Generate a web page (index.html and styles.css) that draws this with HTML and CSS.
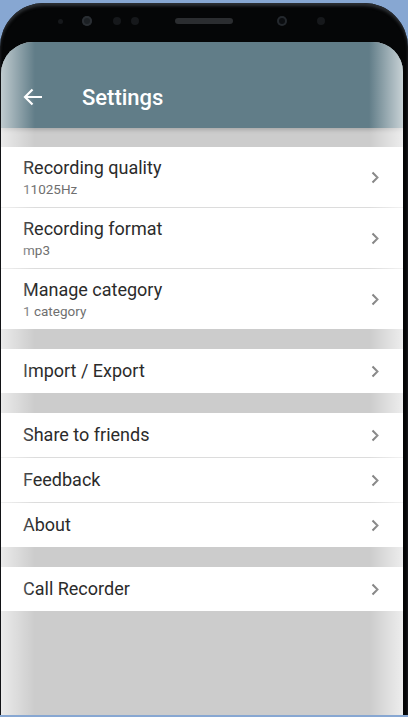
FILE: index.html
```html
<!DOCTYPE html>
<html lang="en">
<head>
    <meta charset="UTF-8">
    <meta name="viewport" content="width=device-width, initial-scale=1.0">
    <title>Settings</title>
    <link rel="stylesheet" href="styles.css">
</head>
<body>

    <div class="phone">
        <!-- top of the device: sensors and speaker -->
        <div class="bezel">
            <span class="dot dot-small"></span>
            <span class="dot dot-cam"></span>
            <span class="dot dot-mid"></span>
            <span class="dot dot-mid dot-near"></span>
            <span class="speaker"></span>
            <span class="dot dot-cam dot-front"></span>
            <span class="dot dot-mid dot-last"></span>
        </div>

        <div class="screen">
            <header class="appbar">
                <div class="toolbar">
                    <svg class="back" width="20" height="18" viewBox="0 0 20 18">
                        <path d="M19 9H2.5M9.5 1.5L2 9l7.5 7.5" fill="none" stroke="#fff" stroke-width="2.2"/>
                    </svg>
                    <h1>Settings</h1>
                </div>
            </header>

            <div class="content">
                <div class="group">
                    <div class="row tall">
                        <div class="text">
                            <div class="title">Recording quality</div>
                            <div class="sub">11025Hz</div>
                        </div>
                        <svg class="chev" width="9" height="13" viewBox="0 0 9 13"><path d="M1.5 1.5l5 5-5 5" fill="none" stroke="#7a7a7a" stroke-width="2"/></svg>
                    </div>
                    <div class="row tall">
                        <div class="text">
                            <div class="title">Recording format</div>
                            <div class="sub">mp3</div>
                        </div>
                        <svg class="chev" width="9" height="13" viewBox="0 0 9 13"><path d="M1.5 1.5l5 5-5 5" fill="none" stroke="#7a7a7a" stroke-width="2"/></svg>
                    </div>
                    <div class="row tall">
                        <div class="text">
                            <div class="title">Manage category</div>
                            <div class="sub">1 category</div>
                        </div>
                        <svg class="chev" width="9" height="13" viewBox="0 0 9 13"><path d="M1.5 1.5l5 5-5 5" fill="none" stroke="#7a7a7a" stroke-width="2"/></svg>
                    </div>
                </div>

                <div class="group">
                    <div class="row">
                        <div class="title">Import / Export</div>
                        <svg class="chev" width="9" height="13" viewBox="0 0 9 13"><path d="M1.5 1.5l5 5-5 5" fill="none" stroke="#7a7a7a" stroke-width="2"/></svg>
                    </div>
                </div>

                <div class="group">
                    <div class="row">
                        <div class="title">Share to friends</div>
                        <svg class="chev" width="9" height="13" viewBox="0 0 9 13"><path d="M1.5 1.5l5 5-5 5" fill="none" stroke="#7a7a7a" stroke-width="2"/></svg>
                    </div>
                    <div class="row">
                        <div class="title">Feedback</div>
                        <svg class="chev" width="9" height="13" viewBox="0 0 9 13"><path d="M1.5 1.5l5 5-5 5" fill="none" stroke="#7a7a7a" stroke-width="2"/></svg>
                    </div>
                    <div class="row">
                        <div class="title">About</div>
                        <svg class="chev" width="9" height="13" viewBox="0 0 9 13"><path d="M1.5 1.5l5 5-5 5" fill="none" stroke="#7a7a7a" stroke-width="2"/></svg>
                    </div>
                </div>

                <div class="group">
                    <div class="row">
                        <div class="title">Call Recorder</div>
                        <svg class="chev" width="9" height="13" viewBox="0 0 9 13"><path d="M1.5 1.5l5 5-5 5" fill="none" stroke="#7a7a7a" stroke-width="2"/></svg>
                    </div>
                </div>
            </div>

            <!-- curved glass on both sides -->
            <div class="edge edge-left"></div>
            <div class="edge edge-right"></div>
        </div>
    </div>

</body>
</html>
```

FILE: styles.css
```css
body {
    margin: 0;
    padding: 0;
    height: 717px;
    overflow: hidden;
    background-color: #87a7d2;
    font-family: Roboto, "Noto Sans", Arial, sans-serif;
    color: #2b2b2b;
}

/* Device frame */
.phone {
    height: 712px;
    margin-top: 3px;
    padding: 0 5px 0 1px;
    background-color: #050607;
    border-radius: 44px 44px 0 0;
    box-shadow: inset 0 3px 3px #2c2f33;
    display: flex;
    flex-direction: column;
}

.bezel {
    height: 39px;
    flex-shrink: 0;
    display: flex;
    align-items: center;
    padding-left: 57px;
    padding-bottom: 3px;
    box-sizing: border-box;
}

.dot {
    display: block;
    border-radius: 50%;
    background-color: #16181b;
}

.dot-small {
    width: 5px;
    height: 5px;
}

.dot-cam {
    width: 10px;
    height: 10px;
    margin-left: 19px;
    background-color: #1c2024;
    box-shadow: inset 0 0 0 2px #2a2e33;
}

.dot-mid {
    width: 8px;
    height: 8px;
    margin-left: 21px;
}

.dot-near {
    margin-left: 10px;
}

.speaker {
    width: 58px;
    height: 6px;
    border-radius: 3px;
    margin-left: 36px;
    background-color: #2b2d30;
}

.dot-front {
    margin-left: 44px;
    background-color: #0b0d10;
    box-shadow: inset 0 0 0 2px #24282d;
}

.dot-last {
    margin-left: 30px;
}

/* Screen */
.screen {
    position: relative;
    flex: 1;
    background-color: #cccccc;
    border-radius: 32px 30px 0 0;
    overflow: hidden;
}

.appbar {
    background-color: #617d88;
    padding-top: 24px;
    box-shadow: 0 2px 4px rgba(0, 0, 0, 0.18);
}

.toolbar {
    height: 62px;
    display: flex;
    align-items: center;
    padding-left: 22px;
}

.back {
    display: block;
}

.toolbar h1 {
    margin: 0 0 0 39px;
    font-size: 22px;
    font-weight: 500;
    color: #fff;
}

.content {
    padding-top: 19px;
}

.group {
    background-color: #fff;
    margin-bottom: 20px;
}

.row {
    height: 44px;
    display: flex;
    align-items: center;
    justify-content: space-between;
    padding: 0 23px 0 22px;
}

.row + .row {
    border-top: 1px solid #dcdcdc;
}

.row.tall {
    height: 60px;
}

.title {
    font-size: 18px;
    line-height: 20px;
    color: #2b2b2b;
}

.sub {
    font-size: 13.5px;
    line-height: 16px;
    margin-top: 3px;
    color: #6f6f6f;
}

.chev {
    display: block;
}

/* Curved edges of the screen */
.edge {
    position: absolute;
    top: 0;
    bottom: 0;
    width: 34px;
}

.edge-left {
    left: 0;
    background: linear-gradient(to right, rgba(255, 255, 255, 0.6), rgba(255, 255, 255, 0));
}

.edge-right {
    right: 0;
    background: linear-gradient(to left, rgba(255, 255, 255, 0.65), rgba(255, 255, 255, 0));
}
```
